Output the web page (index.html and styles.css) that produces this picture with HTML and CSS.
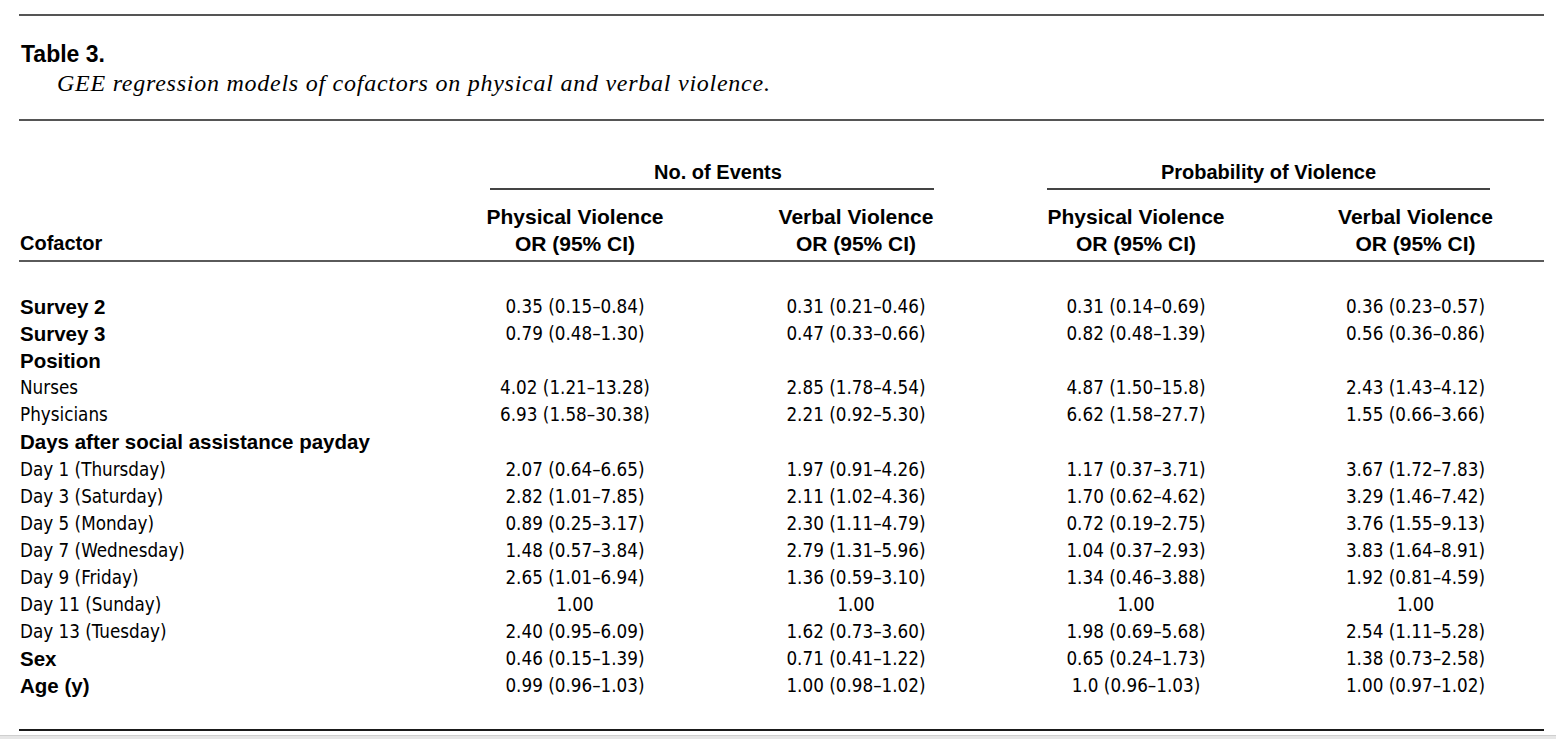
FILE: index.html
```html
<!DOCTYPE html>
<html lang="en">
<head>
<meta charset="utf-8">
<title>Table 3</title>
<link rel="stylesheet" href="styles.css">
</head>
<body>
<div class="page">
  <div class="rule rule-top"></div>
  <div class="title">Table 3.</div>
  <div class="caption">GEE regression models of cofactors on physical and verbal violence.</div>
  <div class="rule rule-mid"></div>

  <div class="row spans">
    <div></div>
    <div class="span span-a">No. of Events</div>
    <div class="span span-b">Probability of Violence</div>
  </div>
  <div class="row subs">
    <div class="label-head">Cofactor</div>
    <div class="sub">Physical Violence<br>OR (95% CI)</div>
    <div class="sub">Verbal Violence<br>OR (95% CI)</div>
    <div class="sub">Physical Violence<br>OR (95% CI)</div>
    <div class="sub last">Verbal Violence<br>OR (95% CI)</div>
  </div>
  <div class="rule rule-head"></div>

  <div class="body">
    <div class="row data"><div class="lab b">Survey 2</div><div class="v">0.35 (0.15–0.84)</div><div class="v">0.31 (0.21–0.46)</div><div class="v">0.31 (0.14–0.69)</div><div class="v last">0.36 (0.23–0.57)</div></div>
    <div class="row data"><div class="lab b">Survey 3</div><div class="v">0.79 (0.48–1.30)</div><div class="v">0.47 (0.33–0.66)</div><div class="v">0.82 (0.48–1.39)</div><div class="v last">0.56 (0.36–0.86)</div></div>
    <div class="row data"><div class="lab b">Position</div></div>
    <div class="row data"><div class="lab">Nurses</div><div class="v">4.02 (1.21–13.28)</div><div class="v">2.85 (1.78–4.54)</div><div class="v">4.87 (1.50–15.8)</div><div class="v last">2.43 (1.43–4.12)</div></div>
    <div class="row data"><div class="lab">Physicians</div><div class="v">6.93 (1.58–30.38)</div><div class="v">2.21 (0.92–5.30)</div><div class="v">6.62 (1.58–27.7)</div><div class="v last">1.55 (0.66–3.66)</div></div>
    <div class="row data"><div class="lab b">Days after social assistance payday</div></div>
    <div class="row data"><div class="lab">Day 1 (Thursday)</div><div class="v">2.07 (0.64–6.65)</div><div class="v">1.97 (0.91–4.26)</div><div class="v">1.17 (0.37–3.71)</div><div class="v last">3.67 (1.72–7.83)</div></div>
    <div class="row data"><div class="lab">Day 3 (Saturday)</div><div class="v">2.82 (1.01–7.85)</div><div class="v">2.11 (1.02–4.36)</div><div class="v">1.70 (0.62–4.62)</div><div class="v last">3.29 (1.46–7.42)</div></div>
    <div class="row data"><div class="lab">Day 5 (Monday)</div><div class="v">0.89 (0.25–3.17)</div><div class="v">2.30 (1.11–4.79)</div><div class="v">0.72 (0.19–2.75)</div><div class="v last">3.76 (1.55–9.13)</div></div>
    <div class="row data"><div class="lab">Day 7 (Wednesday)</div><div class="v">1.48 (0.57–3.84)</div><div class="v">2.79 (1.31–5.96)</div><div class="v">1.04 (0.37–2.93)</div><div class="v last">3.83 (1.64–8.91)</div></div>
    <div class="row data"><div class="lab">Day 9 (Friday)</div><div class="v">2.65 (1.01–6.94)</div><div class="v">1.36 (0.59–3.10)</div><div class="v">1.34 (0.46–3.88)</div><div class="v last">1.92 (0.81–4.59)</div></div>
    <div class="row data"><div class="lab">Day 11 (Sunday)</div><div class="v">1.00</div><div class="v">1.00</div><div class="v">1.00</div><div class="v last">1.00</div></div>
    <div class="row data"><div class="lab">Day 13 (Tuesday)</div><div class="v">2.40 (0.95–6.09)</div><div class="v">1.62 (0.73–3.60)</div><div class="v">1.98 (0.69–5.68)</div><div class="v last">2.54 (1.11–5.28)</div></div>
    <div class="row data"><div class="lab b">Sex</div><div class="v">0.46 (0.15–1.39)</div><div class="v">0.71 (0.41–1.22)</div><div class="v">0.65 (0.24–1.73)</div><div class="v last">1.38 (0.73–2.58)</div></div>
    <div class="row data"><div class="lab b">Age (y)</div><div class="v">0.99 (0.96–1.03)</div><div class="v">1.00 (0.98–1.02)</div><div class="v">1.0 (0.96–1.03)</div><div class="v last">1.00 (0.97–1.02)</div></div>
  </div>
  <div class="rule rule-bottom"></div>
</div>
<div class="band"></div>
</body>
</html>
```
FILE: styles.css
```css
html, body {
  margin: 0;
  padding: 0;
  background: #ffffff;
  height: 739px;
  overflow: hidden;
}
body {
  color: #000;
  font-family: "DejaVu Sans Condensed", "Liberation Sans", sans-serif;
  font-size: 18.7px;
}
.page {
  width: 1525px;
  margin-left: 19px;
  padding-top: 14px;
}
.rule {
  height: 0;
}
.rule-top {
  border-top: 2px solid #555;
}
.title {
  margin-top: 23px;
  font-family: "Liberation Sans", sans-serif;
  font-weight: bold;
  font-size: 23px;
  line-height: 30px;
  padding-left: 2px;
}
.caption {
  margin-top: 0;
  padding-left: 38px;
  font-family: "Liberation Serif", serif;
  font-style: italic;
  font-size: 24px;
  line-height: 28px;
  letter-spacing: 0.75px;
}
.rule-mid {
  margin-top: 22px;
  border-top: 2px solid #555;
}
.row {
  display: grid;
  grid-template-columns: 416px 280px 282px 278px 269px;
}
.spans {
  margin-top: 39px;
}
.span {
  font-family: "Liberation Sans", sans-serif;
  font-weight: bold;
  font-size: 20px;
  line-height: 24px;
  text-align: center;
  padding-bottom: 4px;
  border-bottom: 2px solid #444;
}
.span-a {
  grid-column: 2 / 4;
  margin: 0 63px 0 55px;
  padding-left: 12px;
}
.span-b {
  grid-column: 4 / 6;
  margin: 0 54px 0 50px;
}
.subs {
  margin-top: 13px;
  font-family: "Liberation Sans", sans-serif;
  font-weight: bold;
  font-size: 21px;
  line-height: 27px;
}
.label-head {
  align-self: end;
  padding-left: 1px;
  font-size: 20px;
}
.sub {
  text-align: center;
}
.last {
  padding-left: 12px;
}
.rule-head {
  margin-top: 3px;
  border-top: 2px solid #5a5a5a;
}
.body {
  padding-top: 31px;
}
.data {
  line-height: 27.1px;
  height: 27.1px;
}
.lab {
  white-space: nowrap;
  padding-left: 1px;
}
.lab.b {
  font-family: "Liberation Sans", sans-serif;
  font-weight: bold;
  font-size: 20.5px;
}
.v {
  text-align: center;
  white-space: nowrap;
}
.rule-bottom {
  margin-top: 30px;
  border-top: 2px solid #1a1a1a;
}
.band {
  position: absolute;
  left: 0;
  top: 735px;
  width: 1556px;
  height: 4px;
  background: #e6e6e6;
  border-top: 1px solid #cfcfcf;
}
```
